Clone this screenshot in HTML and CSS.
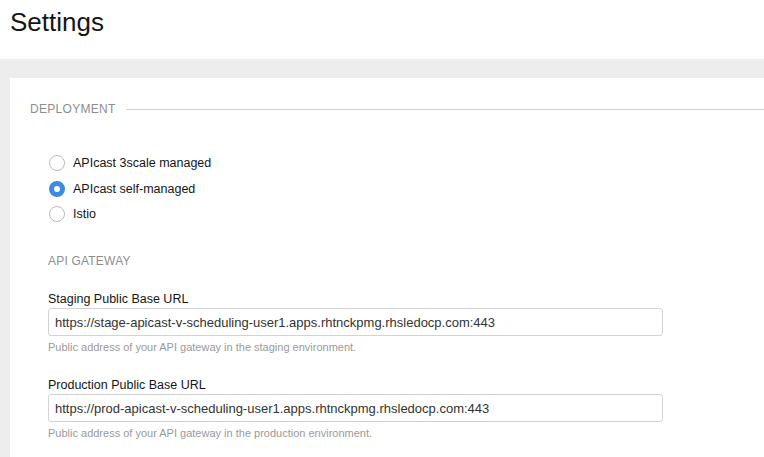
FILE: index.html
```html
<!DOCTYPE html>
<html>
<head>
<meta charset="utf-8">
<link rel="stylesheet" href="styles.css">
</head>
<body>
<header class="page-header"><h1 class="title">Settings</h1></header>
<main class="main">
  <section class="card">
    <div class="legend"><span class="legend-text">DEPLOYMENT</span><span class="legend-line"></span></div>
    <div class="inner">
      <div class="radios">
        <label class="radio-row"><input class="radio" type="radio" name="dep"><span>APIcast 3scale managed</span></label>
        <label class="radio-row"><input class="radio" type="radio" name="dep" checked><span>APIcast self-managed</span></label>
        <label class="radio-row"><input class="radio" type="radio" name="dep"><span>Istio</span></label>
      </div>
      <div class="subhead">API GATEWAY</div>
      <div class="field">
        <label class="field-label">Staging Public Base URL</label>
        <input class="text-input" type="text" value="https://stage-apicast-v-scheduling-user1.apps.rhtnckpmg.rhsledocp.com:443">
        <div class="help">Public address of your API gateway in the staging environment.</div>
      </div>
      <div class="field">
        <label class="field-label">Production Public Base URL</label>
        <input class="text-input" type="text" value="https://prod-apicast-v-scheduling-user1.apps.rhtnckpmg.rhsledocp.com:443">
        <div class="help">Public address of your API gateway in the production environment.</div>
      </div>
    </div>
  </section>
</main>
</body>
</html>
```
FILE: styles.css
```css
* { box-sizing: border-box; }
html, body { margin: 0; height: 100%; }
body {
  background: #ededed;
  font-family: "Liberation Sans", Arial, sans-serif;
  color: #151515;
  overflow: hidden;
}
.page-header {
  background: #fff;
  height: 59px;
  padding: 7px 0 0 10px;
}
.title {
  margin: 0;
  font-size: 26px;
  font-weight: 400;
  line-height: 30px;
  color: #151515;
}
.main {
  padding: 19px 0 0 10px;
  height: calc(100% - 59px);
}
.card {
  background: #fff;
  height: 100%;
  padding: 24px 0 0 20px;
}
.legend {
  display: flex;
  align-items: center;
  gap: 10px;
  height: 14px;
}
.legend-text {
  font-size: 12px;
  color: #8b8d8f;
  letter-spacing: 0.3px;
}
.legend-line {
  flex: 1;
  height: 1px;
  background: #d2d2d2;
}
.inner {
  padding: 39px 0 0 18px;
}
.radios {
  display: flex;
  flex-direction: column;
  gap: 9.5px;
}
.radio-row {
  display: flex;
  align-items: center;
  gap: 8px;
  font-size: 12.5px;
  line-height: 16px;
  color: #151515;
  height: 16px;
}
.radio {
  appearance: none;
  -webkit-appearance: none;
  margin: 0 0 0 1px;
  width: 16px;
  height: 16px;
  border: 1px solid #bdb9b5;
  border-radius: 50%;
  background: #fff;
  flex: none;
}
.radio:checked {
  border: 5px solid #3b8ae3;
}
.subhead {
  margin-top: 32px;
  font-size: 12px;
  letter-spacing: 0.2px;
  color: #8b8d8f;
  line-height: 14px;
}
.field {
  margin-top: 23px;
  display: flex;
  flex-direction: column;
}
.field + .field { margin-top: 23px; }
.field-label {
  font-size: 12.5px;
  line-height: 16px;
  color: #151515;
  margin-bottom: 1px;
}
.text-input {
  width: 615px;
  height: 28px;
  border: 1px solid #d3d3d3;
  border-radius: 3px;
  padding: 0 6px;
  font-family: inherit;
  font-size: 13px;
  color: #333;
  background: #fff;
}
.help {
  margin-top: 4px;
  font-size: 11px;
  line-height: 14px;
  color: #9a9a9a;
}
```
